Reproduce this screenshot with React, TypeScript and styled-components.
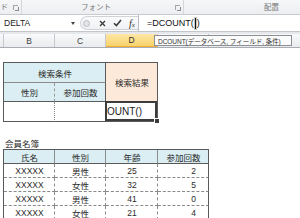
import { createGlobalStyle, styled } from "styled-components";

const GlobalStyle = createGlobalStyle`
  html, body {
    margin: 0;
    padding: 0;
  }
  body {
    width: 300px;
    height: 218px;
    overflow: hidden;
    background: #fff;
    font-family: "Liberation Sans", "Noto Sans CJK JP", sans-serif;
    color: #222;
  }
`;

const App = () => {
  return (
    <Page>
      <GlobalStyle />
      <Ribbon>
        <RibbonGroup $width={22} $justify="flex-end">
          <GroupLabel>ボード</GroupLabel>
          <Launcher />
        </RibbonGroup>
        <RibbonGroup $width={162}>
          <GroupLabel $grow>フォント</GroupLabel>
          <Launcher />
        </RibbonGroup>
        <RibbonGroup $pad={80}>
          <GroupLabel>配置</GroupLabel>
        </RibbonGroup>
      </Ribbon>

      <FormulaBar>
        <NameBox>
          DELTA
          <DropArrow />
        </NameBox>
        <ButtonArea>
          <Grip />
          <BarIcon $left={9}>
            <svg width="7" height="7" viewBox="0 0 7 7">
              <path d="M1 1 L6 6 M6 1 L1 6" stroke="#3a3a3a" strokeWidth="1.3" />
            </svg>
          </BarIcon>
          <BarIcon $left={7}>
            <svg width="9" height="8" viewBox="0 0 9 8">
              <path d="M1 4.2 L3.4 6.6 L8 1" stroke="#3a3a3a" strokeWidth="1.5" fill="none" />
            </svg>
          </BarIcon>
          <FxLabel>
            f<small>x</small>
          </FxLabel>
        </ButtonArea>
        <FormulaInput>
          =DCOUNT(
          <Caret />)
        </FormulaInput>
      </FormulaBar>

      <HeaderGap />

      <ColumnHeaders>
        <ColHead $width={4} />
        <ColHead $width={51}>B</ColHead>
        <ColHead $width={51}>C</ColHead>
        <ColHead $width={52} $active>
          D
        </ColHead>
        <ColHead $width={51} />
        <ColHead $width={92} />
      </ColumnHeaders>

      <Sheet>
        <SearchTable>
          <Cell $bg="#daeef3" $span={2} $bb="1px solid #8c8c8c">
            検索条件
          </Cell>
          <Cell $bg="#fde9d9" $rows={2}>
            検索結果
          </Cell>
          <Cell $bg="#daeef3" $br="1px dashed #9a9a9a">
            性別
          </Cell>
          <Cell $bg="#daeef3">参加回数</Cell>
          <Cell $br="1px dotted #8a8a8a" />
          <Cell />
          <SelectedCell $align="flex-start">OUNT()</SelectedCell>
        </SearchTable>

        <SheetTitle>会員名簿</SheetTitle>

        <MemberTable>
          {["氏名", "性別", "年齢", "参加回数"].map(h => (
            <Cell key={h} $bg="#daeef3" $h={14} $br={h === "参加回数" ? undefined : "1px solid #8c8c8c"}>
              {h}
            </Cell>
          ))}
          {members.map((m, i) => (
            <Row key={i} {...m} />
          ))}
        </MemberTable>
      </Sheet>

      <Tooltip>DCOUNT(データベース, フィールド, 条件)</Tooltip>
    </Page>
  );
};

export default App;

const members = [
  { name: "XXXXX", sex: "男性", age: 25, count: 2 },
  { name: "XXXXX", sex: "女性", age: 32, count: 5 },
  { name: "XXXXX", sex: "男性", age: 41, count: 0 },
  { name: "XXXXX", sex: "女性", age: 21, count: 4 },
];

interface RowProps {
  name: string;
  sex: string;
  age: number;
  count: number;
}

const Row = ({ name, sex, age, count }: RowProps) => {
  const dash = "1px dashed #8a8a8a";
  return (
    <>
      <Cell $h={14} $br={dash} $bb={dash}>
        {name}
      </Cell>
      <Cell $h={14} $br={dash} $bb={dash}>
        {sex}
      </Cell>
      <Cell $h={14} $br={dash} $bb={dash}>
        {age}
      </Cell>
      <Cell $h={14} $bb={dash} $align="flex-end" $padRight={12}>
        {count}
      </Cell>
    </>
  );
};

const Page = styled.div`
  position: relative;
  width: 300px;
  height: 218px;
  overflow: hidden;
`;

const Ribbon = styled.div`
  display: flex;
  height: 15px;
  box-sizing: border-box;
  background: linear-gradient(#f6f7f8, #eceef1);
  border-bottom: 1px solid #c6c9cd;
`;

const RibbonGroup = styled.div<{ $width?: number; $justify?: string; $pad?: number }>`
  display: flex;
  align-items: center;
  justify-content: ${p => p.$justify ?? "flex-start"};
  gap: 5px;
  box-sizing: border-box;
  width: ${p => (p.$width ? `${p.$width}px` : "auto")};
  flex: ${p => (p.$width ? "none" : 1)};
  padding-left: ${p => p.$pad ?? 0}px;
  padding-right: 3px;
  overflow: hidden;
  border-right: ${p => (p.$width ? "1px solid #d3d6da" : "none")};
`;

const GroupLabel = styled.span<{ $grow?: boolean }>`
  flex: ${p => (p.$grow ? 1 : "none")};
  text-align: center;
  font-size: 7.5px;
  color: #7a7a7a;
  white-space: nowrap;
  padding-bottom: 1px;
`;

const Launcher = styled.span`
  flex: none;
  position: relative;
  width: 4px;
  height: 4px;
  border-left: 1px solid #a6a6a6;
  border-top: 1px solid #a6a6a6;

  &::after {
    content: "";
    position: absolute;
    right: -1px;
    bottom: -1px;
    width: 3px;
    height: 3px;
    border-right: 1px solid #8a8a8a;
    border-bottom: 1px solid #8a8a8a;
  }
`;

const FormulaBar = styled.div`
  display: flex;
  height: 17px;
  box-sizing: border-box;
  background: #fff;
  border-bottom: 1px solid #c2c5c9;
`;

const NameBox = styled.div`
  display: flex;
  align-items: center;
  width: 80px;
  box-sizing: border-box;
  padding: 0 5px 0 4px;
  font-size: 8.5px;
  color: #222;
`;

const DropArrow = styled.span`
  margin-left: auto;
  width: 0;
  height: 0;
  border-left: 2.5px solid transparent;
  border-right: 2.5px solid transparent;
  border-top: 3px solid #444;
`;

const ButtonArea = styled.div`
  display: flex;
  align-items: center;
  width: 58px;
  box-sizing: border-box;
  margin: 1px 0;
  border: 1px solid #cfd2d6;
  border-right: none;
  border-radius: 8px 0 0 8px;
  background: linear-gradient(#fbfbfc, #eff1f3);
`;

const Grip = styled.span`
  margin-left: 2px;
  width: 5px;
  height: 5px;
  border-radius: 50%;
  border: 1px solid #b8bcc1;
  background: #e3e5e8;
`;

const BarIcon = styled.span<{ $left: number }>`
  display: flex;
  margin-left: ${p => p.$left}px;
`;

const FxLabel = styled.span`
  margin-left: 7px;
  font-family: "Liberation Serif", serif;
  font-style: italic;
  font-size: 10px;
  color: #333;

  small {
    font-size: 7px;
  }
`;

const FormulaInput = styled.div`
  flex: 1;
  display: flex;
  align-items: center;
  padding-left: 8px;
  border-left: 1px solid #b9bcc0;
  font-size: 9px;
  color: #111;
  white-space: pre;
`;

const Caret = styled.span`
  display: inline-block;
  width: 1px;
  height: 11px;
  margin: 0 1px;
  background: #111;
  outline: 1px solid #c8c8c8;
`;

const HeaderGap = styled.div`
  height: 2px;
  background: #e6e8eb;
`;

const ColumnHeaders = styled.div`
  display: flex;
  height: 14px;
  box-sizing: border-box;
  background: linear-gradient(#f8f9fa, #e9ebee);
  border-bottom: 1px solid #a9adb3;
`;

const ColHead = styled.div<{ $width: number; $active?: boolean }>`
  flex: none;
  display: flex;
  align-items: center;
  justify-content: center;
  width: ${p => p.$width}px;
  box-sizing: border-box;
  border-right: 1px solid #c5c8cd;
  font-size: 8.5px;
  color: #3c3c3c;
  ${p =>
    p.$active &&
    `
    background: linear-gradient(#fde7a6, #f8d36a);
    border-bottom: 1px solid #f0ac35;
    color: #333;
  `}
`;

const Sheet = styled.div`
  padding: 14px 0 0 3px;
`;

const Table = styled.div`
  display: grid;
  width: max-content;
  border-left: 1px solid #5a5a5a;
  border-top: 1px solid #5a5a5a;
`;

const SearchTable = styled(Table)`
  grid-template-columns: 51px 51px 52px;
  grid-template-rows: 20px 19px 20px;
`;

const MemberTable = styled(Table)`
  grid-template-columns: 51px 51px 52px 51px;
`;

interface CellProps {
  $bg?: string;
  $span?: number;
  $rows?: number;
  $br?: string;
  $bb?: string;
  $align?: string;
  $h?: number;
  $padRight?: number;
}

const Cell = styled.div<CellProps>`
  display: flex;
  align-items: center;
  justify-content: ${p => p.$align ?? "center"};
  box-sizing: border-box;
  height: ${p => (p.$h ? `${p.$h}px` : "auto")};
  padding: 0 ${p => p.$padRight ?? 0}px 0 1px;
  grid-column: span ${p => p.$span ?? 1};
  grid-row: span ${p => p.$rows ?? 1};
  background: ${p => p.$bg ?? "#fff"};
  border-right: ${p => p.$br ?? "1px solid #5a5a5a"};
  border-bottom: ${p => p.$bb ?? "1px solid #5a5a5a"};
  font-size: 8.5px;
  color: #2a2a2a;
  white-space: nowrap;
`;

const SelectedCell = styled(Cell)`
  position: relative;
  font-size: 10px;
  color: #1a1a1a;

  &::after {
    content: "";
    position: absolute;
    top: -1px;
    left: -1px;
    right: 0;
    bottom: 0;
    border: 2px solid #3c3c3c;
  }

  &::before {
    content: "";
    position: absolute;
    right: -3px;
    bottom: -3px;
    width: 4px;
    height: 4px;
    background: #3c3c3c;
    border: 1px solid #fff;
    z-index: 1;
  }
`;

const SheetTitle = styled.div`
  display: flex;
  align-items: center;
  height: 13px;
  margin-top: 14px;
  padding-left: 2px;
  font-size: 8.5px;
  color: #2a2a2a;
`;

const Tooltip = styled.div`
  position: absolute;
  left: 154px;
  top: 35px;
  width: 138px;
  height: 11px;
  box-sizing: border-box;
  display: flex;
  align-items: center;
  padding-left: 3px;
  background: #fbfbfb;
  border: 1px solid #8c8f93;
  font-size: 6.6px;
  letter-spacing: -0.1px;
  color: #333;
  white-space: nowrap;
`;
